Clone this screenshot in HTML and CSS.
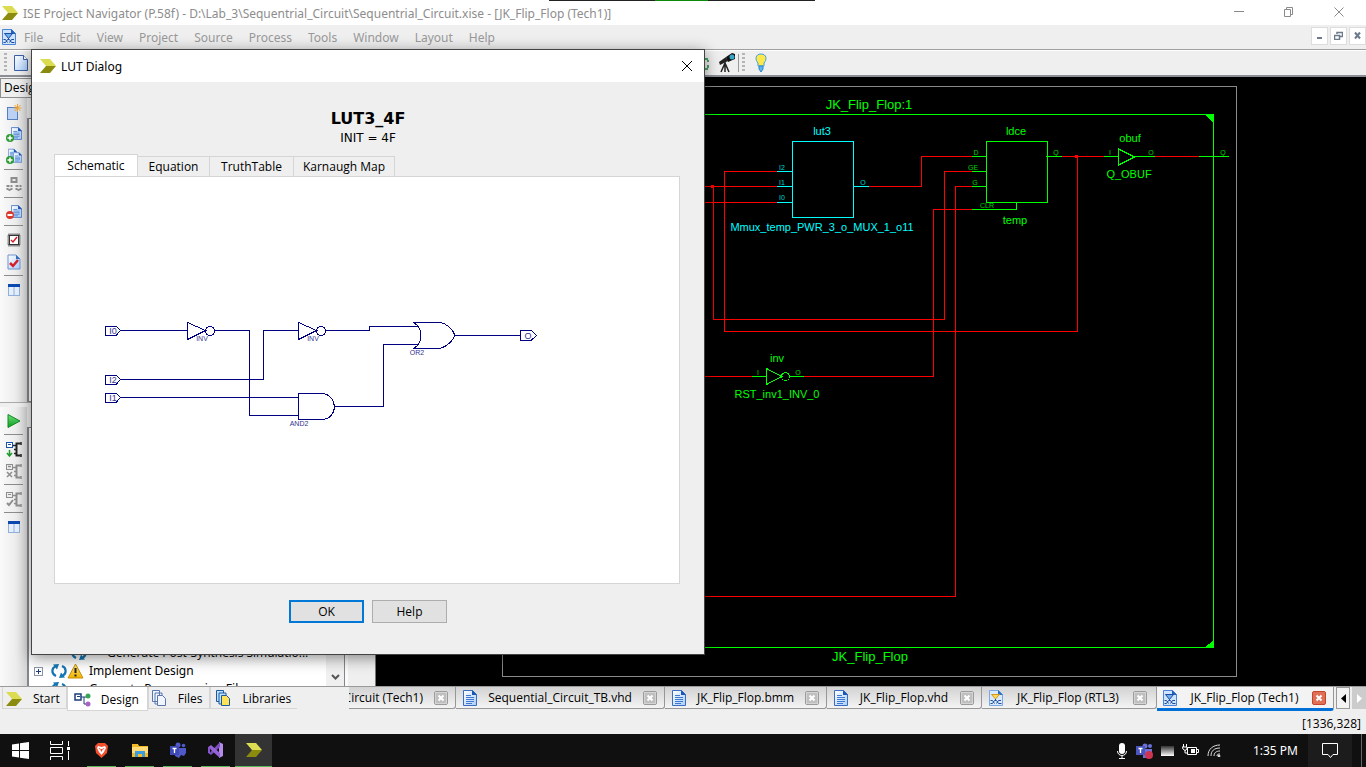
FILE: index.html
```html
<!DOCTYPE html>
<html lang="en">
<head>
<meta charset="utf-8">
<title>ISE Project Navigator</title>
<link rel="stylesheet" href="styles.css">
</head>
<body>
<svg class="defs" aria-hidden="true">
  <defs>
    <linearGradient id="paper" x1="0" y1="0" x2="1" y2="1"><stop offset="0" stop-color="#fff"/><stop offset="1" stop-color="#a9cdfa"/></linearGradient>
    <linearGradient id="gold" x1="0" y1="0" x2="0" y2="1"><stop offset="0" stop-color="#ffe58a"/><stop offset="1" stop-color="#f0b400"/></linearGradient>
    <linearGradient id="play" x1="0" y1="0" x2="0" y2="1"><stop offset="0" stop-color="#6fe07a"/><stop offset="1" stop-color="#0b9a20"/></linearGradient>
    <linearGradient id="silver" x1="0" y1="0" x2="0" y2="1"><stop offset="0" stop-color="#333"/><stop offset="1" stop-color="#fff"/></linearGradient>
    <symbol id="ise" viewBox="0 0 16 14"><path d="M0 0h10l6 7H6z" fill="#dbdc52"/><path d="M6 7h10l-6 7H0z" fill="#8b8b10"/></symbol>
    <symbol id="doc" viewBox="0 0 14 16"><path d="M.5.5h9l4 4v11H.5z" fill="url(#paper)" stroke="#3a6cc0"/><path d="M9 0v5h5z" fill="#1d57b5"/><path d="M3 5.500h5M3 7.500h8M3 9.500h8M3 11.500h8M3 13.500h6" stroke="#3f78d0"/></symbol>
    <symbol id="sch" viewBox="0 0 14 16"><path d="M.5.5h9l4 4v11H.5z" fill="#cfe3fc" stroke="#4a86d8"/><path d="M9 0v5h5z" fill="#2462bb"/><path d="M2.500 4.500h8L6.500 9.500z" fill="#6fb0f4" stroke="#1b4c9e"/><path d="M6.500 9v2M1.500 13.500h2l2-3h2l2 3h3M1.500 10.500h2l2 3M12 10.500H9.500l-2 3" stroke="#1b4c9e" fill="none"/></symbol>
    <symbol id="rtl" viewBox="0 0 14 16"><path d="M.5.5h9l4 4v11H.5z" fill="#d9eafe" stroke="#7aa7e3"/><path d="M9 0v5h5z" fill="#2e6fc4"/><path d="M2.500 4.500h8L6.500 9z" fill="#ffd75a" stroke="#d09a18"/><path d="M6.500 9v2M1.500 13.500h2l2-3h2l2 3h3M1.500 10.500h2l2 3M12 10.500H9.500l-2 3" stroke="#234f9c" fill="none"/></symbol>
    <symbol id="plus" viewBox="0 0 8 8"><circle cx="4" cy="4" r="4" fill="#2d9a33"/><path d="M4 1.500v5M1.500 4h5" stroke="#fff" stroke-width="1.500"/></symbol>
    <symbol id="close" viewBox="0 0 14 14"><rect x=".5" y=".5" width="13" height="13" rx="1.500" fill="#bfbfbf" stroke="#9b9b9b" stroke-width="1"/><rect x="1.500" y="1.500" width="11" height="11" fill="none" stroke="#d4d4d4"/><path d="M4.500 4.500l5 5M9.500 4.500l-5 5" stroke="#fff" stroke-width="2"/></symbol>
    <symbol id="cols" viewBox="0 0 12 12"><rect x=".5" y=".5" width="11" height="11" fill="#e4eefc" stroke="#8fb0dd"/><path d="M0 0h12v3H0z" fill="#0b49b0"/><path d="M6 3v9" stroke="#8fb0dd"/></symbol>
    <symbol id="chip" viewBox="0 0 16 16"><path d="M14.500 2.500h-4v12h4" fill="none" stroke="currentColor" stroke-width="2"/><path d="M7 4.500h3M8 8.500h2M8 12.500h2M15 1v3M15 13v3" stroke="currentColor" stroke-width="1.500"/></symbol>
    <symbol id="sync" viewBox="0 0 16 14"><path d="M5 12C0 10 .5 4 4.500 2.500M11 2c5 2 4.500 8 .5 9.500" fill="none" stroke="#1477b5" stroke-width="2.200"/><path d="M2 .5l6-.5-2 5.500zM14 13.500l-6 .5 2-5.500z" fill="#1477b5"/></symbol>
  </defs>
</svg>

<header class="titlebar">
  <svg class="logo" width="16" height="14"><use href="#ise"/></svg>
  <h1 class="title">ISE Project Navigator (P.58f) - D:\Lab_3\Sequentrial_Circuit\Sequentrial_Circuit.xise - [JK_Flip_Flop (Tech1)]</h1>
  <div class="share-strip"></div>
  <div class="win-buttons">
    <button aria-label="Minimize"><svg width="12" height="12"><path d="M1 5.500h10"/></svg></button>
    <button aria-label="Restore"><svg width="12" height="12"><path d="M1.500 3.500h6v7h-6zM3.500 3V1.500h6v7H8"/></svg></button>
    <button aria-label="Close"><svg width="12" height="12"><path d="M1.500 1.500l9 9M10.500 1.500l-9 9"/></svg></button>
  </div>
</header>

<nav class="menubar">
  <svg width="14" height="16"><use href="#sch"/></svg>
  <ul class="menu">
    <li><a href="#">File</a></li><li><a href="#">Edit</a></li><li><a href="#">View</a></li><li><a href="#">Project</a></li><li><a href="#">Source</a></li><li><a href="#">Process</a></li><li><a href="#">Tools</a></li><li><a href="#">Window</a></li><li><a href="#">Layout</a></li><li><a href="#">Help</a></li>
  </ul>
  <div class="mdi-buttons">
    <button aria-label="Minimize document"><svg width="9" height="9"><path d="M2 7h5" stroke-width="2"/></svg></button>
    <button aria-label="Restore document"><svg width="9" height="9"><path d="M.5 4.500h5v4h-5zM3 3V1.500h5.500v4H6M3 1.500h6M0 4.500h6" stroke-width="1.500"/></svg></button>
    <button aria-label="Close document"><svg width="9" height="9"><path d="M2 1.500l5 6M7 1.500l-5 6" stroke-width="2"/></svg></button>
  </div>
</nav>

<div class="toolbar">
  <div class="tool-start">
    <span class="grip"></span>
    <button aria-label="New"><svg width="15" height="17"><path d="M.5.5h9l4 4v11H.5z" fill="url(#paper)" stroke="#3a5fa8"/><path d="M9.500.5v4h4" fill="#fff" stroke="#3a5fa8"/></svg></button>
  </div>
  <div class="tool-end">
    <button aria-label="Refresh"><svg width="18" height="17"><path d="M7 4h7v3M14 10v4H7" fill="none" stroke="#49a565" stroke-width="2" stroke-dasharray="3 1"/></svg></button>
    <button aria-label="Find"><svg width="18" height="20"><path d="M1 9l7-5 2 4-8 4z" fill="#222"/><path d="M8 4l6-4 3 1v5l-7 3z" fill="#111"/><circle cx="14" cy="4" r="2.500" fill="#37a6c9"/><path d="M7 10l-4 9M7 9v10M7 10l4 9" stroke="#222" stroke-width="1.500"/></svg></button>
    <span class="grip ruled"></span>
    <button aria-label="Tip"><svg width="12" height="20"><path d="M6 1c6 0 6 6 3 9v3H3v-3C0 7 0 1 6 1z" fill="#ffe84a" stroke="#3da0e6"/><path d="M4 13h4v3l-2 3-2-3z" fill="#58b7ef" stroke="#2f82c8"/></svg></button>
  </div>
</div>

<main class="workspace">
  <aside class="dock">
    <div class="dock-title">Design</div>
    <section class="pane pane-top">
      <div class="strip">
        <button aria-label="New source"><svg width="16" height="16"><rect x="1.500" y="3.500" width="10" height="12" fill="#bcd2f5" stroke="#5580bf"/><path d="M11.500 0v8M7.500 4h8M8.500 1l6 6M14.500 1l-6 6" stroke="#f2a228"/></svg></button>
        <button aria-label="Add source"><svg width="16" height="16"><use href="#doc" x="5" width="11" height="15"/><use href="#plus" y="8" width="8" height="8"/></svg></button>
        <button aria-label="Add copy"><svg width="16" height="16"><use href="#doc" x="2" width="9" height="12"/><use href="#doc" x="7" y="3" width="9" height="13"/><use href="#plus" y="8" width="8" height="8"/></svg></button>
        <hr>
        <button aria-label="Hierarchy"><svg width="16" height="16" fill="#e8e8e8" stroke="#8d8d8d" stroke-width="2"><rect x="5.500" y="2" width="5" height="4"/><rect x="1.500" y="10" width="4" height="4" stroke-dasharray="2 1"/><rect x="10.500" y="10" width="4" height="4" stroke-dasharray="2 1"/></svg></button>
        <hr>
        <button aria-label="Remove source"><svg width="16" height="16"><use href="#doc" x="5" width="11" height="15"/><circle cx="4" cy="11" r="4" fill="#d93a2b"/><path d="M1.500 11h5" stroke="#fff" stroke-width="2"/></svg></button>
        <hr>
        <button aria-label="Check design"><svg width="14" height="14"><rect x="1.500" y="1.500" width="11" height="11" fill="none" stroke="#333" stroke-width="2" stroke-dasharray="1 1"/><rect x="2.500" y="2.500" width="9" height="9" fill="#fff" stroke="#333"/><path d="M4 7l2 2 4-5" fill="none" stroke="#d4202a" stroke-width="1.500"/></svg></button>
        <button aria-label="Check source"><svg width="14" height="16"><path d="M1 1h8l4 4v10H1z" fill="url(#paper)" stroke="#6e93cf"/><path d="M9 1v4h4z" fill="#2e6fc4"/><path d="M3 9l3 3 5-6" fill="none" stroke="#d4202a" stroke-width="2.500"/></svg></button>
        <hr>
        <button aria-label="Columns"><svg width="12" height="12"><use href="#cols"/></svg></button>
      </div>
      <div class="tree-box"></div>
    </section>
    <section class="pane pane-bottom">
      <div class="strip">
        <button aria-label="Run"><svg width="14" height="14"><path d="M1 .5L13 7 1 13.500z" fill="url(#play)" stroke="#128a24"/></svg></button>
        <hr>
        <button aria-label="Implement"><svg width="16" height="16" class="dark"><use href="#chip"/><rect x=".5" y="1.500" width="6" height="5" fill="#fff" stroke="#1c50ad"/><path d="M2 3.500h3" stroke="#1c50ad"/><path d="M3.500 9v5M1 12l2.500 3L6 12" stroke="#1d9a2c" stroke-width="1.500" fill="none"/></svg></button>
        <button aria-label="Stop"><svg width="16" height="16" class="dim"><use href="#chip"/><rect x=".5" y="1.500" width="6" height="5" fill="#eee" stroke="#8d8d8d"/><path d="M2 3.500h3M1 9l5 5M6 9l-5 5" stroke="#8d8d8d" stroke-width="1.500"/></svg></button>
        <hr>
        <button aria-label="Verify"><svg width="16" height="16" class="dim"><use href="#chip"/><rect x=".5" y="1.500" width="6" height="5" fill="#eee" stroke="#8d8d8d"/><path d="M2 3.500h3" stroke="#8d8d8d"/><path d="M1 12l2 2 4-5" fill="none" stroke="#8d8d8d" stroke-width="2"/></svg></button>
        <hr>
        <button aria-label="Columns"><svg width="12" height="12"><use href="#cols"/></svg></button>
      </div>
      <div class="tree-box process-tree">
        <ul class="tree">
          <li class="row child"><svg width="16" height="14"><use href="#sync"/></svg><span>Generate Post-Synthesis Simulatio...</span></li>
          <li class="row"><svg width="9" height="9"><rect x=".5" y=".5" width="8" height="8" fill="#fff" stroke="#8b95a5"/><path d="M2 4.500h5M4.500 2v5" stroke="#1d3d7c"/></svg><svg class="state" width="33" height="16"><use href="#sync" y="1" width="16" height="14"/><path d="M24.500 1l7.500 14H17z" fill="url(#gold)" stroke="#c58f00"/><path d="M24.500 5v5M24.500 11.500v2" stroke="#222" stroke-width="2"/></svg><span>Implement Design</span></li>
          <li class="row"><span class="blank"></span><svg class="state" width="33" height="14"><use href="#sync" width="16" height="14"/></svg><span>Generate Programming File</span></li>
        </ul>
        <div class="scroll"><svg width="9" height="6"><path d="M1 1l3.500 3.500L8 1" fill="none" stroke="#555" stroke-width="2"/></svg></div>
      </div>
    </section>
  </aside>
  <div class="splitter"></div>
  <section class="canvas">
    <svg width="990" height="609" viewBox="376 77 990 609" role="img" aria-label="JK_Flip_Flop technology schematic">
      <g class="frame"><path d="M502.500 86.500h734v590h-734z"/></g>
      <g class="red">
        <path d="M600 186.500H777M600 202.500H777M777 171.500H724.500V331.500H1077.500V156.500M713.500 186.500V319.500H944.500V171.500H972M869 186.500H921.500V156.500H972M972 186.500H955.500V596.500H600M972 209.500H933.500V376.500H804M600 376.500H752M1062 156.500H1104M1155 156.500H1199"/>
        <path d="M711.500 185.500h2v2h-2zM1075.500 155.500h2v2h-2z"/>
      </g>
      <g class="green">
        <path d="M520 114.500H1213.500V647.500H520"/>
        <path class="solid" d="M1206 114.500h7.500v8zM1206 647.500l7.500-7v7z"/>
        <path d="M986.500 141.500h61v61h-61zM972 156.500h14M972 171.500h14M972 186.500h14M972 209.500h44.500v-7M1046 156.500h16M1104 156.500h14M1118.500 149v16l16-8zM1134 156.500h21M1199 156.500h30M752 376.500h14M766.500 368.500v16l15-8zM789 376.500h15"/>
        <circle cx="785.500" cy="376.500" r="4"/>
      </g>
      <g class="cyan"><path d="M792.500 141.500h61v76h-61zM777 171.500h15M777 186.500h15M777 202.500h15M853 186.500h16"/></g>
      <g class="net green-text">
        <text class="big" x="869" y="109">JK_Flip_Flop:1</text>
        <text class="big" x="870" y="661">JK_Flip_Flop</text>
        <text x="1016" y="135">ldce</text><text x="1015" y="224">temp</text>
        <text x="1130" y="142">obuf</text><text x="1129" y="178">Q_OBUF</text>
        <text x="777" y="362">inv</text><text x="777" y="398">RST_inv1_INV_0</text>
        <g class="pin"><text x="976" y="155">D</text><text x="973" y="170">GE</text><text x="975" y="185">G</text><text x="987" y="208">CLR</text><text x="1056" y="155">Q</text><text x="1110" y="155">I</text><text x="1151" y="155">O</text><text x="1223" y="155">Q</text><text x="758" y="375">I</text><text x="798" y="375">O</text></g>
      </g>
      <g class="net cyan-text">
        <text x="822" y="135">lut3</text><text x="822" y="231">Mmux_temp_PWR_3_o_MUX_1_o11</text>
        <g class="pin"><text x="782" y="170">I2</text><text x="782" y="185">I1</text><text x="782" y="200">I0</text><text x="863" y="185">O</text></g>
      </g>
    </svg>
  </section>
</main>

<div class="tabbar">
  <div class="dock-tabs">
    <button><svg width="16" height="14"><use href="#ise"/></svg>Start</button>
    <button class="on"><svg width="17" height="14"><rect x="1" y="1" width="6" height="6" fill="#fff" stroke="#1d3d7c" stroke-width="1.500"/><path d="M3 3.500h3M7 4h6M10 4v7h3" stroke="#1d3d7c" fill="none"/><circle cx="14" cy="3" r="2.500" fill="#3aa556"/><circle cx="14" cy="11" r="2.500" fill="#a565c0"/></svg>Design</button>
    <button><svg width="15" height="17" fill="#f1f5fd" stroke="#5a76ae"><path d="M.5.5h7v11h-7zM3 3h7v11H3z"/><path d="M5.500 5.500h5l3 3v7h-8z"/></svg>Files</button>
    <button class="lib"><svg width="15" height="17" stroke="#1a5b9e"><path d="M.5.500h7v11h-7z" fill="#bfe1ff"/><path d="M3 3h7v11H3z" fill="#bfe1ff"/><path d="M5.500 5.500h5l3 3v7h-8z" fill="#ffe25a"/></svg>Libraries</button>
  </div>
  <div class="doc-tabs">
    <div class="doc-tab w1"><button class="name">Sequential_Circuit (Tech1)</button><button aria-label="Close tab"><svg width="14" height="14"><use href="#close"/></svg></button></div>
    <div class="doc-tab w2"><svg width="14" height="16"><use href="#doc"/></svg><button class="name">Sequential_Circuit_TB.vhd</button><button aria-label="Close tab"><svg width="14" height="14"><use href="#close"/></svg></button></div>
    <div class="doc-tab w3"><svg width="14" height="16"><use href="#doc"/></svg><button class="name">JK_Flip_Flop.bmm</button><button aria-label="Close tab"><svg width="14" height="14"><use href="#close"/></svg></button></div>
    <div class="doc-tab w4"><svg width="14" height="16"><use href="#doc"/></svg><button class="name">JK_Flip_Flop.vhd</button><button aria-label="Close tab"><svg width="14" height="14"><use href="#close"/></svg></button></div>
    <div class="doc-tab w5"><svg width="14" height="16"><use href="#rtl"/></svg><button class="name">JK_Flip_Flop (RTL3)</button><button aria-label="Close tab"><svg width="14" height="14"><use href="#close"/></svg></button></div>
    <div class="doc-tab w6 active"><svg width="14" height="16"><use href="#sch"/></svg><button class="name">JK_Flip_Flop (Tech1)</button><button aria-label="Close tab"><svg width="14" height="14"><rect x=".5" y=".5" width="13" height="13" rx="1.500" fill="#df7058" stroke="#c8432b"/><path d="M4.500 4.500l5 5M9.500 4.500l-5 5" stroke="#fff" stroke-width="2"/></svg></button></div>
    <button class="arrow" aria-label="Scroll left"><svg width="5" height="9"><path d="M5 0v9L0 4.500z" fill="#000"/></svg></button>
    <button class="arrow off" aria-label="Scroll right"><svg width="5" height="9"><path d="M0 0v9l5-4.500z" fill="#fff"/></svg></button>
  </div>
</div>

<div class="status">[1336,328]</div>

<footer class="taskbar">
  <div class="apps">
    <button aria-label="Start menu"><svg width="17" height="17" fill="#fff"><path d="M0 2.500l7-1v6.500H0zM8 1.300L17 0v8H8zM0 9h7v6.500l-7-1zM8 9h9v8l-9-1.300z"/></svg></button>
    <button aria-label="Task view"><svg width="20" height="19" fill="none" stroke="#fff"><path d="M.5 0v3.500h12V0M.5 19v-3.500h12V19M.5 6.500h12v6H.5zM18.500 0v5M18.500 10v9"/><path d="M17 6h3v3h-3z" fill="#fff" stroke="none"/></svg></button>
    <button class="run first" aria-label="Brave"><svg width="13" height="16"><path d="M3 1h7l3 3-1 7-5.500 5L1 11 0 4z" fill="#f4502d"/><path d="M3 4l3.500 1L10 4l1 2-2 4-2.500 3L4 10 2 6z" fill="#fff"/><path d="M5 7h3l-1.500 3zM3.500 6l2 .5-1 1zM9.500 6l-2 .5 1 1z" fill="#f4502d"/></svg></button>
    <button class="run" aria-label="File Explorer"><svg width="16" height="14"><path d="M0 1h6l1 2h9v11H0z" fill="#f2b929"/><path d="M0 4h16v6H0z" fill="#ffdc77"/><path d="M3 14V8h10v6h-3v-3H6v3z" fill="#3d9be0"/></svg></button>
    <button class="run" aria-label="Teams"><svg width="16" height="16" fill="#5059c9"><circle cx="8" cy="3" r="2.500"/><circle cx="13.500" cy="3.500" r="1.800"/><path d="M6 6h10v5l-2 3-3-1-2 3-4-2z"/><path d="M0 4h9v9H0z" fill="#3f49b5"/><path d="M2.500 6.500h4M4.500 6v5" stroke="#fff" stroke-width="1.300"/></svg></button>
    <button class="run" aria-label="Visual Studio"><svg width="16" height="16"><path d="M11 0l4 2v12l-4 2z" fill="#b58be8"/><path d="M1 11.500L3 13 12 5V0L3.500 9z" fill="#7a4fc0"/><path d="M1 4.500L3 3l9 8v5L3 8z" fill="#9563d6"/><path d="M0 5l2-1v8l-2-1z" fill="#8555c9"/></svg></button>
    <button class="run current" aria-label="ISE"><svg width="16" height="14"><use href="#ise"/></svg></button>
  </div>
  <div class="tray">
    <svg width="12" height="16" fill="none" stroke="#fff"><rect x="3" y="0" width="6" height="11" rx="3" fill="#fff" stroke="none"/><path d="M1.500 8c0 6 9 6 9 0M6 13v2.500M3 15.500h6"/></svg>
    <svg width="17" height="16" fill="#6a72d8"><circle cx="9" cy="3" r="2.500"/><circle cx="14" cy="3" r="2"/><path d="M7 6h9v6l-4 3H7z"/><path d="M0 3h9v9H0z" fill="#4a54bd"/><path d="M2.500 5.500h4M4.500 5v5" stroke="#fff" stroke-width="1.300"/><circle cx="13" cy="12" r="4" fill="#cf3450"/></svg>
    <svg width="13" height="10"><path d="M0 0h13v10H0z" fill="url(#silver)"/></svg>
    <svg width="17" height="13" fill="none" stroke="#fff"><path d="M5.500 3.500h9v7h-9zM15 5.500h1.500v3H15M1.500 0v3M4.500 0v3M0 3h5v2l-2 1.500L1 5zM3 6v3h2"/><path d="M9 5h4v4H9z" fill="#fff" stroke="none"/></svg>
    <svg width="14" height="13" fill="none" stroke="#ddd"><path d="M1 12C1 5 6 1 13 1M4 12c0-5 3-8 9-8M7 12c0-3 2-5 6-5M10 12c0-2 1-2 3-2"/><circle cx="12" cy="12" r="1" fill="#fff"/></svg>
    <time class="clock">1:35 PM</time>
    <button class="notice" aria-label="Notifications"><svg width="17" height="17" fill="none" stroke="#fff"><path d="M.5 1.500h15v11H11l-2.500 3-2.500-3H.5z"/></svg></button>
    <span class="peek"></span>
  </div>
</footer>

<div class="dialog" role="dialog" aria-labelledby="dlg-title">
  <header class="dlg-head">
    <svg width="16" height="14"><use href="#ise"/></svg>
    <span id="dlg-title" class="dlg-title">LUT Dialog</span>
    <button aria-label="Close dialog"><svg width="12" height="12"><path d="M1 1l10 10M11 1L1 11" stroke="#000"/></svg></button>
  </header>
  <h2 class="lut">LUT3_4F</h2>
  <p class="init">INIT = 4F</p>
  <div class="dlg-tabs" role="tablist">
    <button role="tab" aria-selected="true" class="on">Schematic</button>
    <button role="tab">Equation</button>
    <button role="tab" class="mid">TruthTable</button>
    <button role="tab" class="last">Karnaugh Map</button>
  </div>
  <div class="sheet" role="tabpanel">
    <svg width="600" height="400" viewBox="55 177 600 400" role="img" aria-label="LUT schematic">
      <g class="navy">
        <path d="M105.500 326.500h11l4 4-4 4.500h-11zM105.500 375.500h11l4 4-4 4.500h-11zM105.500 393.500h11l4 4-4 4.500h-11zM520.500 330.500h11l5 5-5 4.500h-11z"/>
        <path d="M120 330.500H187M215 330.500H249.500V415.500H298M120 379.500H263.500V330.500H298M326 330.500H369.500V326.500H418M120 397.500H298M335 406.500H383.500V344.500H418M455 335.500H520"/>
        <path d="M187.500 322.500v17l18-9zM298.500 322.500v17l18-9z"/>
        <circle cx="210" cy="331" r="4.500"/><circle cx="321" cy="331" r="4.500"/>
        <path d="M298.500 393.500H322c16 1 17 25 0 26h-23.500z"/>
        <path d="M413.500 322.500H440c7 1 13 7 15 13-2 5-8 11-15 13H413.500c10-6 10-20 0-26z"/>
      </g>
      <g class="tag"><g class="port"><text x="113" y="334">I0</text><text x="113" y="383">I2</text><text x="113" y="401">I1</text><text x="528" y="339">O</text></g>
      <text x="202" y="341">INV</text><text x="313" y="341">INV</text><text x="417" y="355">OR2</text><text x="299" y="426">AND2</text></g>
    </svg>
  </div>
  <div class="dlg-actions"><button class="primary">OK</button><button>Help</button></div>
</div>
</body>
</html>
```
FILE: styles.css
```css
* { box-sizing: border-box; }
body {
  margin: 0;
  height: 100vh;
  display: flex;
  flex-direction: column;
  overflow: hidden;
  position: relative;
  background: #efefef;
  color: #000;
  font: 12px/16px "Open Sans", "Noto Sans", sans-serif;
}
button {
  margin: 0;
  padding: 0;
  border: 0;
  background: none;
  color: inherit;
  font: inherit;
  display: flex;
  align-items: center;
  justify-content: center;
}
svg { display: block; flex: none; }
ul { list-style: none; margin: 0; padding: 0; }
.defs { position: absolute; width: 0; height: 0; }

.titlebar {
  flex: none;
  height: 25px;
  display: flex;
  align-items: center;
  gap: 5px;
  padding-left: 2px;
  background: #fff;
  color: #8d8d8d;
  position: relative;
}
.title { margin: 0; flex: 1; font: 12px/16px "Noto Sans", sans-serif; padding-top: 2px; white-space: nowrap; }
.share-strip {
  position: absolute;
  top: 0;
  left: 40.2%;
  width: 266px;
  height: 1px;
  background: linear-gradient(90deg, #222 0 106px, #0a8a0a 106px 159px, #222 159px);
}
.win-buttons { display: flex; gap: 38px; padding: 0 21px 2px 0; }
.win-buttons path { fill: none; stroke: #8a8a8a; }

.menubar {
  flex: none;
  height: 25px;
  display: flex;
  align-items: center;
  padding-left: 2px;
  border-bottom: 1px solid #9f9f9f;
}
.menu { display: flex; flex: 1; gap: 16px; padding: 2px 0 0 8px; font-family: "Noto Sans", sans-serif; }
.menu a { color: #999; text-decoration: none; }
.mdi-buttons { display: flex; gap: 2px; padding-bottom: 3px; }
.mdi-buttons button { width: 17px; height: 18px; background: #fff; border: 1px solid #ddd; }
.mdi-buttons path { fill: none; stroke: #6c7a8c; }

.toolbar {
  flex: none;
  height: 27px;
  display: flex;
  border-top: 1px solid #fff;
  border-bottom: 2px solid #8a8e94;
}
.tool-start { width: 694px; display: flex; align-items: center; gap: 7px; padding-left: 4px; }
.tool-end { display: flex; align-items: center; gap: 6px; }
.grip { width: 3px; height: 20px; background: repeating-linear-gradient(#b5b5b5 0 2px, transparent 2px 4px); }
.ruled { margin-right: 4px; box-shadow: -4px 0 0 -1px #efefef, -5px 0 0 -1px #999; }

.workspace { flex: 1; min-height: 0; display: flex; }
.dock { width: 345px; flex: none; display: flex; flex-direction: column; }
.dock-title {
  height: 20px;
  margin-top: 1px;
  padding-left: 3px;
  border: 1px solid #8f8f8f;
  line-height: 18px;
}
.pane { display: flex; min-height: 0; }
.pane-top { height: 304px; }
.pane-bottom { flex: 1; border-top: 1px solid #aaa; padding-top: 4px; }
.strip {
  flex: none;
  width: 27px;
  display: flex;
  flex-direction: column;
  align-items: center;
  padding-top: 3px;
  background: linear-gradient(90deg, #fafafa, #ececec 60%, #d6d6d6);
}
.strip button { height: 22px; width: 22px; }
.strip hr { width: 19px; margin: 2px 0 3px; border: 0; border-top: 1px solid #8b8b8b; }
.dark { color: #222; }
.dim { color: #8d8d8d; }
.tree-box { flex: 1; min-width: 0; margin-top: 20px; border: 1px solid #83868c; border-left-width: 2px; background: #fff; }
.process-tree { display: flex; align-items: flex-end; overflow: hidden; border-bottom: 0; }
.tree { flex: 1; min-width: 0; height: 42px; padding-left: 5px; }
.row { display: flex; align-items: center; height: 18px; gap: 5px; white-space: nowrap; font-family: "Noto Sans", sans-serif; }
.row.child { padding-left: 37px; gap: 20px; font-family: inherit; }
.blank { width: 9px; }
.state { margin-left: 3px; }
.scroll { align-self: stretch; width: 18px; background: #f0f0f0; display: flex; align-items: flex-end; justify-content: center; padding-bottom: 6px; }
.splitter { width: 31px; flex: none; border-right: 1px solid #777; border-left: 3px solid #fafafa; }
.canvas { flex: 1; min-width: 0; overflow: hidden; background: #000; }
.frame, .red, .green, .cyan, .navy { fill: none; shape-rendering: crispEdges; }
.frame { stroke: #8a8a8a; }
.red { stroke: #f00; }
.green { stroke: #0f0; }
.green .solid { fill: #0f0; }
.cyan { stroke: #0ff; }
.navy { stroke: #000080; }
.net { font: 11px "Liberation Sans", sans-serif; text-anchor: middle; }
.net .big { font-size: 13px; }
.net .pin { font-size: 7px; opacity: 0.8; }
.green-text { fill: #0f0; }
.cyan-text { fill: #0ff; }
.tag { font: 7px "Liberation Sans", sans-serif; fill: #33338f; text-anchor: middle; }
.port { font-size: 9px; }

.tabbar { flex: none; height: 25px; display: flex; border-top: 1px solid #9a9a9a; align-items: flex-start; }
.dock-tabs { width: 349px; flex: none; display: flex; padding-left: 2px; }
.dock-tabs button { height: 22px; border: 1px solid #d5d5d5; border-top: 0; gap: 11px; padding: 2px 6px 0 3px; }
.dock-tabs .on { height: 24px; background: #fff; padding: 2px 8px 0 6px; gap: 10px; }
.dock-tabs .lib { border-right: 0; padding-left: 5px; gap: 12px; }
.doc-tabs { flex: 1; min-width: 0; display: flex; }
.doc-tab {
  flex: none;
  height: 22px;
  display: flex;
  align-items: center;
  padding: 1px 7px 0;
  border: 1px solid #979797;
  border-width: 0 1px 1px 0;
  border-bottom-right-radius: 3px;
  background: linear-gradient(#d2d2d2, #f4f4f4);
  overflow: hidden;
}
.doc-tab .name { flex: 1; white-space: nowrap; }
.w1 { width: 107px; }
.w1 .name { justify-content: flex-end; min-width: 0; padding-right: 11px; }
.w2 { width: 209px; }
.w3 { width: 162px; }
.w4 { width: 155px; }
.w5 { width: 175px; padding-right: 9px; }
.w6 { width: 177px; }
.doc-tab.active { height: 24px; background: #f3f3f3; border-bottom: 3px solid #0070d8; padding-left: 6px; }
.arrow { width: 14px; height: 22px; margin-left: 2px; border: 1px solid #999; background: #f3f3f3; }
.arrow.off { background: #ccc; border-color: #ccc; }

.status { flex: none; height: 23px; padding: 5px 5px 0; text-align: right; }

.taskbar { flex: none; height: 33px; display: flex; justify-content: space-between; background: #101010; color: #fff; }
.apps { display: flex; }
.apps button { width: 40px; height: 33px; }
.apps .run { width: 29px; margin-left: 9px; border-bottom: 1px solid #5ab65a; }
.apps .first { margin-left: 7px; }
.apps .current { width: 37px; margin-left: 5px; background: #333; }
.tray { display: flex; align-items: center; gap: 8px; }
.clock { margin: 0 2px 0 24px; font: 12px/16px "Noto Sans", sans-serif; }
.notice { width: 44px; height: 33px; margin-right: 1px; background: #1c1c1c; }
.peek { width: 5px; height: 33px; border-left: 1px solid #666; }

.dialog {
  position: absolute;
  left: 31px;
  top: 49px;
  width: 674px;
  display: flex;
  flex-direction: column;
  padding-bottom: 31px;
  border: 1px solid #444;
  background: #efefef;
  box-shadow: 0 3px 14px rgba(0, 0, 0, 0.45);
}
.dlg-head { height: 32px; display: flex; align-items: center; gap: 5px; padding: 0 11px 0 8px; background: #fff; }
.dlg-title { flex: 1; padding-top: 2px; font-family: "Noto Sans", sans-serif; }
.lut { margin: 26px 0 0; text-align: center; font: bold 16px/22px "DejaVu Sans", sans-serif; }
.init { margin: 0; text-align: center; font-family: "DejaVu Sans", sans-serif; }
.dlg-tabs { display: flex; align-items: flex-end; height: 22px; margin: 8px 22px 0; }
.dlg-tabs button { height: 20px; width: 72px; border: 1px solid #d5d5d5; border-left: 0; border-bottom: 0; }
.dlg-tabs .on { width: 84px; height: 22px; border-left: 1px solid #d5d5d5; background: #fff; }
.dlg-tabs .mid { width: 84px; }
.dlg-tabs .last { width: 101px; }
.sheet { height: 408px; margin: 0 24px 0 22px; border: 1px solid #d5d5d5; background: #fff; overflow: hidden; }
.dlg-actions { display: flex; justify-content: center; gap: 8px; padding-top: 16px; }
.dlg-actions button { width: 75px; height: 23px; border: 1px solid #adadad; background: #e1e1e1; }
.dlg-actions .primary { border: 2px solid #0078d7; }
```
